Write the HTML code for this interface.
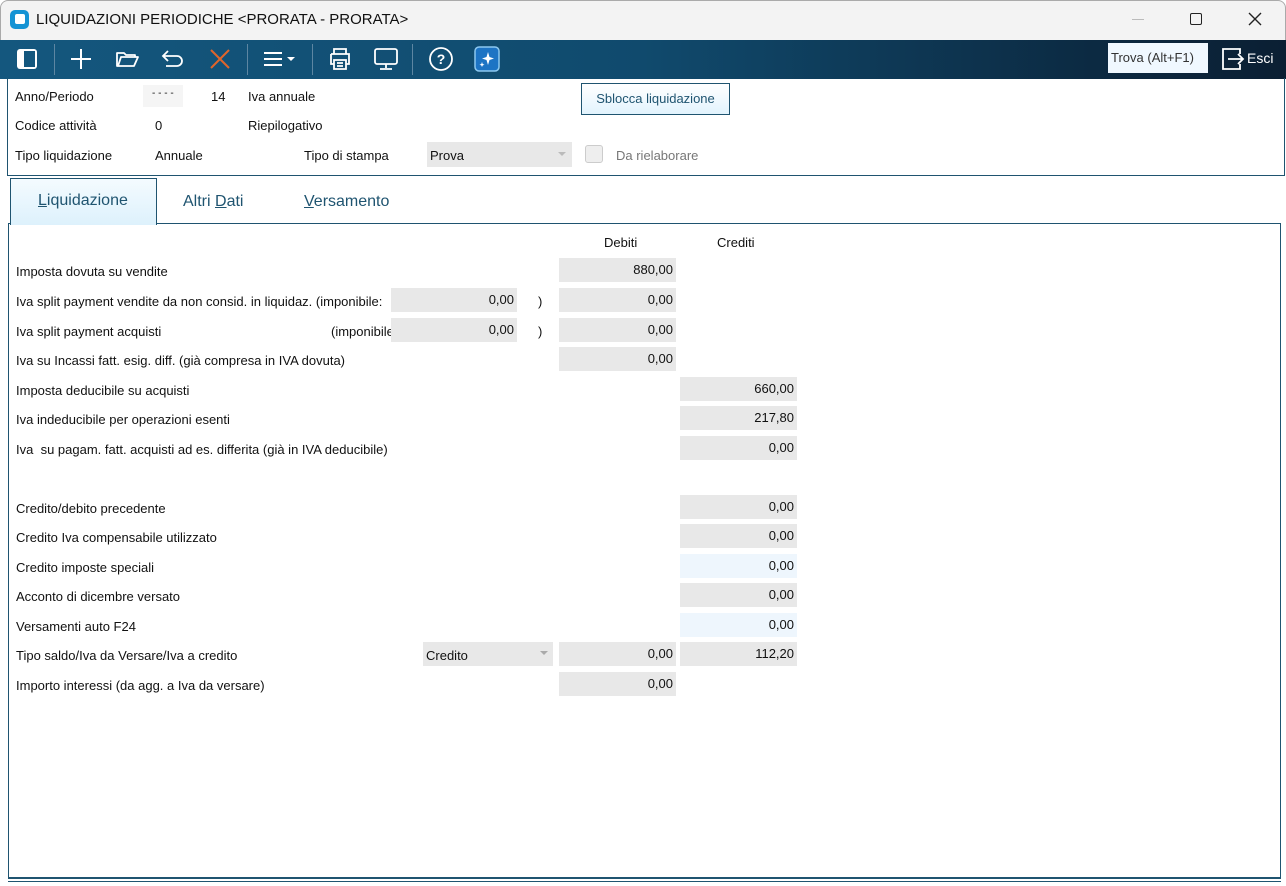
<!DOCTYPE html>
<html><head><meta charset="utf-8"><style>
*{margin:0;padding:0;box-sizing:border-box}
body{width:1286px;height:886px;background:#fff;font-family:"Liberation Sans",sans-serif;font-size:13px;color:#111;position:relative;overflow:hidden}
.abs{position:absolute}
.title{left:0;top:0;width:1286px;height:40px;background:#f3f3f3;border:1px solid #aaa;border-bottom:none;border-radius:8px 8px 0 0}
.tb{left:0;top:40px;width:1286px;height:39px;background:linear-gradient(90deg,#14577e 0%,#104a6d 50%,#0c2a42 85%,#0b1f33 100%)}
.sep{position:absolute;top:4px;width:1px;height:31px;background:#5d86a2}
.lbl{position:absolute;white-space:nowrap}
.f{position:absolute;height:24px;background:#e8e8e8;text-align:right;padding-right:3px;line-height:24px}
.fb{background:#eef6fd}
</style></head><body>
<div class="abs title"></div>
<div class="abs" style="left:10px;top:10px;width:19px;height:19px;border-radius:5px;background:#1593d4"><div style="position:absolute;left:5px;top:4px;width:10px;height:10px;border-radius:2px;background:#fff"></div></div>
<div class="lbl" style="left:36px;top:11px;font-size:15px;color:#111">LIQUIDAZIONI PERIODICHE &lt;PRORATA - PRORATA&gt;</div>
<div class="abs" style="left:1132px;top:19px;width:12px;height:1px;background:#bbb"></div>
<div class="abs" style="left:1190px;top:13px;width:12px;height:12px;border:1.5px solid #222;border-radius:2px"></div>
<svg class="abs" style="left:1248px;top:12px" width="14" height="14"><path d="M1 1L13 13M13 1L1 13" stroke="#222" stroke-width="1.4"/></svg>

<div class="abs tb">
<svg class="abs" style="left:15px;top:7px" width="24" height="24"><rect x="2" y="2" width="20" height="20" rx="3" fill="#fff"/><rect x="9" y="4" width="11" height="16" fill="#14577e"/></svg>
<div class="sep" style="left:54px"></div>
<svg class="abs" style="left:69px;top:7px" width="24" height="24"><path d="M12 2V22M2 12H22" stroke="#fff" stroke-width="2"/></svg>
<svg class="abs" style="left:115px;top:7px" width="24" height="24"><path d="M2 6H9L11 8H20V10H6L3 19H2Z M6 10H23L19 19H3Z" fill="none" stroke="#fff" stroke-width="1.8" stroke-linejoin="round"/></svg>
<svg class="abs" style="left:161px;top:7px" width="24" height="24"><path d="M7 4L2 9L7 14M2 9H16A5 5 0 0 1 16 19H5" fill="none" stroke="#fff" stroke-width="1.8"/></svg>
<svg class="abs" style="left:208px;top:7px" width="24" height="24"><path d="M3 3L21 21M21 3L3 21" stroke="#e0652a" stroke-width="2"/></svg>
<div class="sep" style="left:247px"></div>
<svg class="abs" style="left:262px;top:7px" width="36" height="24"><path d="M2 6H20M2 12H20M2 18H20" stroke="#fff" stroke-width="2"/><path d="M25 10H33L29 14Z" fill="#fff"/></svg>
<div class="sep" style="left:312px"></div>
<svg class="abs" style="left:327px;top:6px" width="26" height="26"><path d="M7 8V3H19V8M4 8H22V18H19M7 18H4V8M7 14H19V23H7Z M10 17H16M10 20H16" fill="none" stroke="#fff" stroke-width="1.8"/></svg>
<svg class="abs" style="left:373px;top:6px" width="26" height="26"><rect x="2" y="3" width="22" height="15" rx="2" fill="none" stroke="#fff" stroke-width="1.8"/><path d="M13 18V22M7 23H19" stroke="#fff" stroke-width="1.8"/></svg>
<div class="sep" style="left:412px"></div>
<svg class="abs" style="left:428px;top:6px" width="26" height="26"><circle cx="13" cy="13" r="11" fill="none" stroke="#fff" stroke-width="1.8"/><text x="13" y="18" text-anchor="middle" fill="#fff" font-size="14" font-family="Liberation Sans" font-weight="bold">?</text></svg>
<svg class="abs" style="left:474px;top:6px" width="26" height="26"><rect x="1" y="1" width="24" height="24" rx="4" fill="#1d74c4" stroke="#8cc8f0" stroke-width="1.5"/><path d="M14 6L15.5 11L20 12.5L15.5 14L14 19L12.5 14L8 12.5L12.5 11Z" fill="#fff"/><path d="M8 16L8.7 18L10.5 18.7L8.7 19.4L8 21L7.3 19.4L5.5 18.7L7.3 18Z" fill="#fff"/></svg>
<div class="abs" style="left:1108px;top:3px;width:100px;height:30px;background:#f0f8ff;color:#333;line-height:30px;padding-left:3px;font-size:13px">Trova (Alt+F1)</div>
<svg class="abs" style="left:1220px;top:6px" width="26" height="26"><path d="M12 3H3V23H12" fill="none" stroke="#fff" stroke-width="1.8"/><path d="M12 3H20V8M20 18V23H12M8 13H23M18 8L23 13L18 18" fill="none" stroke="#fff" stroke-width="1.8"/></svg>
<div class="lbl" style="left:1247px;top:10px;color:#fff;font-size:14px">Esci</div>
</div>

<div class="abs" style="left:7px;top:78px;width:1278px;height:98px;border:1px solid #1f5470;border-top:none"></div>
<div class="lbl" style="left:15px;top:89px">Anno/Periodo</div>
<div class="abs" style="left:143px;top:85px;width:40px;height:22px;background:#f5f5f5"></div>
<div class="lbl" style="left:152px;top:88px;font-size:10px">- - - -</div>
<div class="lbl" style="left:211px;top:89px">14</div>
<div class="lbl" style="left:248px;top:89px">Iva annuale</div>
<div class="lbl" style="left:15px;top:118px">Codice attività</div>
<div class="lbl" style="left:155px;top:118px">0</div>
<div class="lbl" style="left:248px;top:118px">Riepilogativo</div>
<div class="lbl" style="left:15px;top:148px">Tipo liquidazione</div>
<div class="lbl" style="left:155px;top:148px">Annuale</div>
<div class="lbl" style="left:304px;top:148px">Tipo di stampa</div>
<div class="abs" style="left:427px;top:142px;width:145px;height:25px;background:#e8e8e8"></div>
<div class="lbl" style="left:430px;top:148px">Prova</div>
<div class="abs" style="left:558px;top:152px;border:4px solid transparent;border-top:4px solid #bbb"></div>
<div class="abs" style="left:585px;top:145px;width:18px;height:18px;border:1px solid #ccc;border-radius:3px;background:#eee"></div>
<div class="lbl" style="left:616px;top:148px;color:#777">Da rielaborare</div>
<div class="abs" style="left:581px;top:83px;width:149px;height:32px;border:1px solid #1f5470;background:linear-gradient(#fff,#e2f3fd);text-align:center;line-height:30px;color:#1f5470">Sblocca liquidazione</div>

<div class="abs" style="left:10px;top:178px;width:147px;height:47px;border:1px solid #1f5470;border-bottom:none;background:linear-gradient(#f4fbff,#ddf1fc);z-index:2"></div>
<div class="lbl" style="left:38px;top:192px;font-size:16px;color:#1f5470;z-index:3"><u>L</u>iquidazione</div>
<div class="lbl" style="left:183px;top:193px;font-size:16px;color:#1f5470">Altri <u>D</u>ati</div>
<div class="lbl" style="left:304px;top:193px;font-size:16px;color:#1f5470"><u>V</u>ersamento</div>
<div class="abs" style="left:8px;top:223px;width:1273px;height:656px;border:1px solid #1f5470;border-bottom:2px solid #1f5470"></div>
<div class="abs" style="left:8px;top:881px;width:1273px;height:1px;background:#1f5470"></div>

<div class="lbl" style="left:604px;top:235px">Debiti</div>
<div class="lbl" style="left:717px;top:235px">Crediti</div>

<div class="lbl" style="left:16px;top:264px">Imposta dovuta su vendite</div>
<div class="f" style="left:559px;top:258px;width:117px">880,00</div>

<div class="lbl" style="left:16px;top:294px">Iva split payment vendite da non consid. in liquidaz. (imponibile:</div>
<div class="f" style="left:391px;top:288px;width:126px">0,00</div>
<div class="lbl" style="left:538px;top:294px">)</div>
<div class="f" style="left:559px;top:288px;width:117px">0,00</div>

<div class="lbl" style="left:16px;top:324px">Iva split payment acquisti</div>
<div class="lbl" style="left:331px;top:324px">(imponibile</div>
<div class="f" style="left:391px;top:318px;width:126px">0,00</div>
<div class="lbl" style="left:538px;top:324px">)</div>
<div class="f" style="left:559px;top:318px;width:117px">0,00</div>

<div class="lbl" style="left:16px;top:353px">Iva su Incassi fatt. esig. diff. (già compresa in IVA dovuta)</div>
<div class="f" style="left:559px;top:347px;width:117px">0,00</div>

<div class="lbl" style="left:16px;top:383px">Imposta deducibile su acquisti</div>
<div class="f" style="left:680px;top:377px;width:117px">660,00</div>
<div class="lbl" style="left:16px;top:412px">Iva indeducibile per operazioni esenti</div>
<div class="f" style="left:680px;top:406px;width:117px">217,80</div>
<div class="lbl" style="left:16px;top:442px">Iva &nbsp;su pagam. fatt. acquisti ad es. differita (già in IVA deducibile)</div>
<div class="f" style="left:680px;top:436px;width:117px">0,00</div>

<div class="lbl" style="left:16px;top:501px">Credito/debito precedente</div>
<div class="f" style="left:680px;top:495px;width:117px">0,00</div>
<div class="lbl" style="left:16px;top:530px">Credito Iva compensabile utilizzato</div>
<div class="f" style="left:680px;top:524px;width:117px">0,00</div>
<div class="lbl" style="left:16px;top:560px">Credito imposte speciali</div>
<div class="f fb" style="left:680px;top:554px;width:117px">0,00</div>
<div class="lbl" style="left:16px;top:589px">Acconto di dicembre versato</div>
<div class="f" style="left:680px;top:583px;width:117px">0,00</div>
<div class="lbl" style="left:16px;top:619px">Versamenti auto F24</div>
<div class="f fb" style="left:680px;top:613px;width:117px">0,00</div>
<div class="lbl" style="left:16px;top:648px">Tipo saldo/Iva da Versare/Iva a credito</div>
<div class="abs" style="left:423px;top:642px;width:130px;height:24px;background:#e8e8e8"></div>
<div class="lbl" style="left:426px;top:648px">Credito</div>
<div class="abs" style="left:540px;top:651px;border:4px solid transparent;border-top:4px solid #aaa"></div>
<div class="f" style="left:559px;top:642px;width:117px">0,00</div>
<div class="f" style="left:680px;top:642px;width:117px">112,20</div>
<div class="lbl" style="left:16px;top:678px">Importo interessi (da agg. a Iva da versare)</div>
<div class="f" style="left:559px;top:672px;width:117px">0,00</div>
</body></html>
